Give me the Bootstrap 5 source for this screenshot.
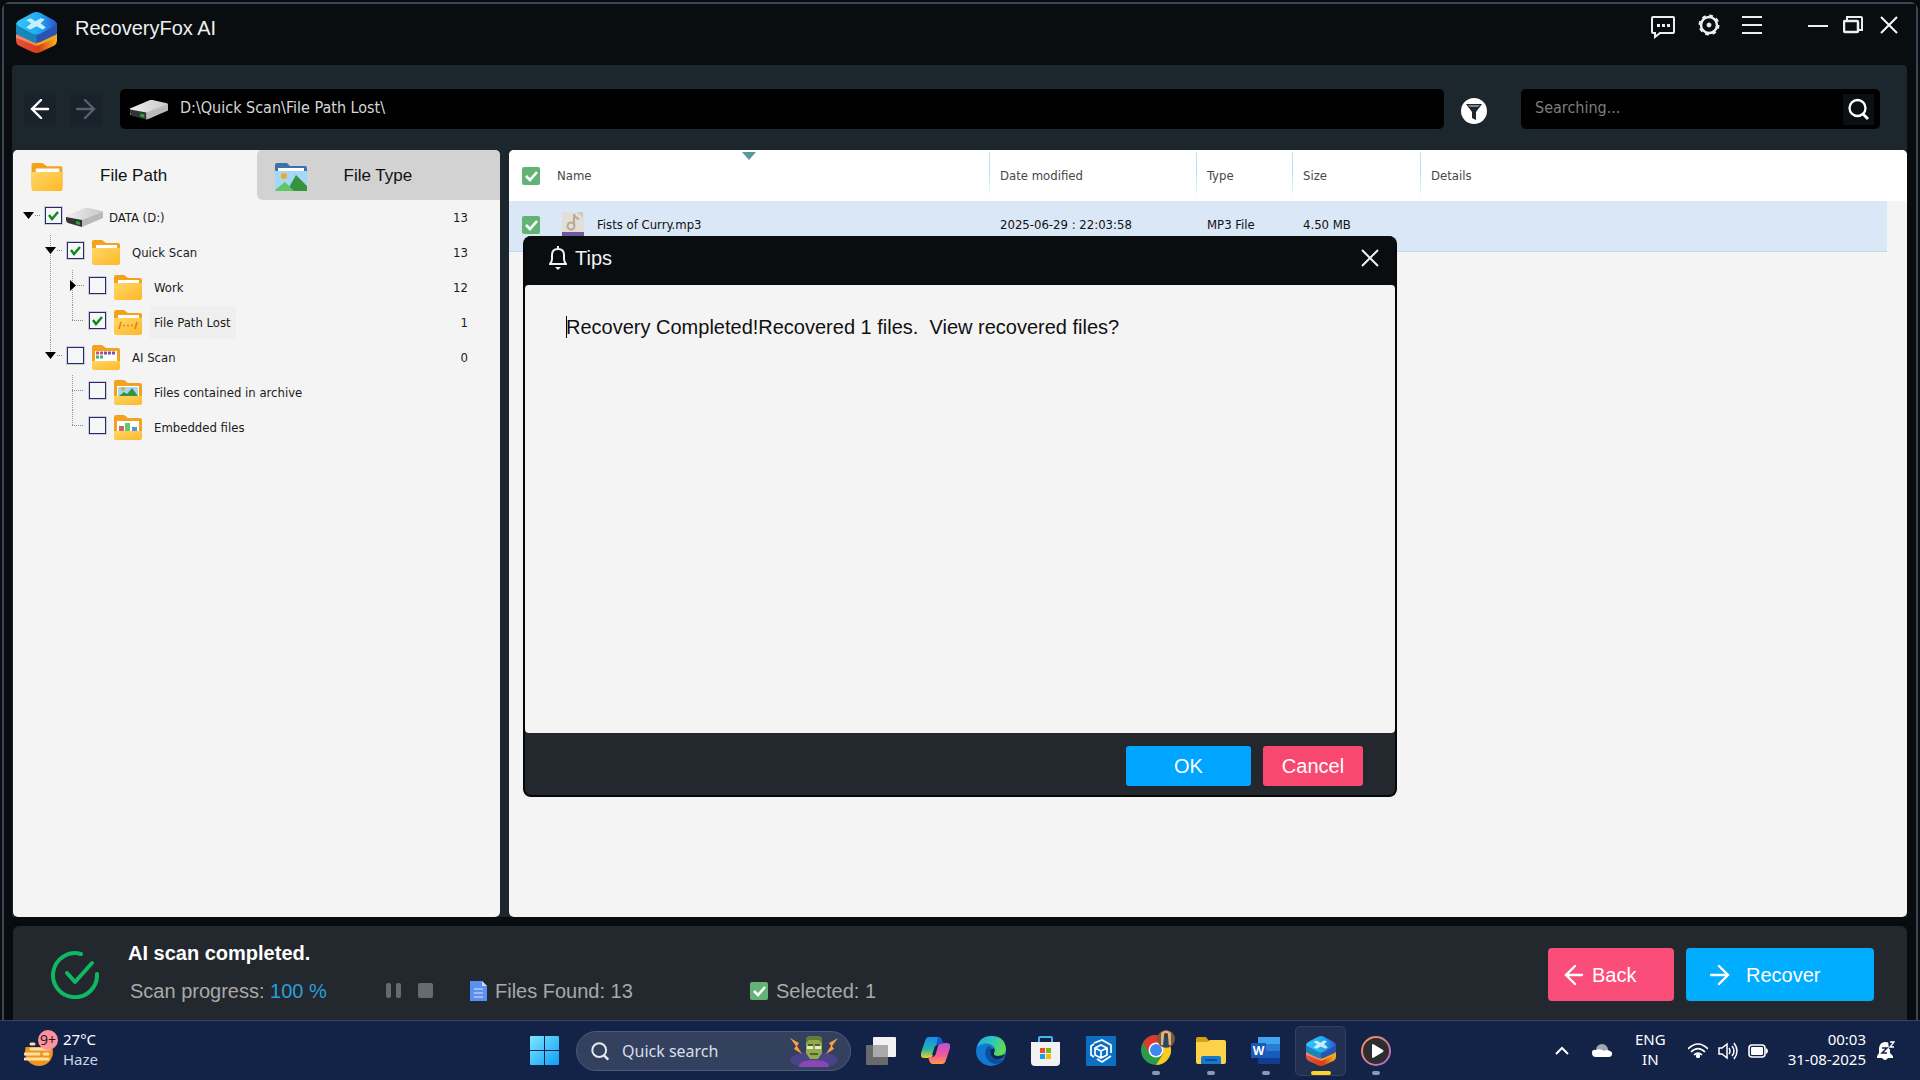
<!DOCTYPE html>
<html lang="en">
<head>
<meta charset="utf-8">
<meta name="viewport" content="width=device-width, initial-scale=1">
<title>RecoveryFox AI</title>
<link href="https://cdn.jsdelivr.net/npm/bootstrap@5.3.0/dist/css/bootstrap.min.css" rel="stylesheet">
<style>
  :root { --ui: "Noto Sans", "Open Sans", sans-serif; --list: "DejaVu Sans Condensed", "DejaVu Sans", sans-serif; --head: "Liberation Sans", Arial, sans-serif; }
  body { background: #080c0f; font-family: var(--head); font-size: 20px; line-height: 24px; color: #fff; overflow: hidden; }
  svg { display: block; flex: none; }
  button.plain { background: none; border: 0; padding: 0; color: inherit; display: flex; align-items: center; justify-content: center; flex: none; }
  .app-window { border: 2px solid #3d4753; border-bottom: 0; border-radius: 8px 8px 0 0; margin: 2px 2px 0; background: #080c0f; }
  .title-bar { height: 61px; padding: 0 18px 0 12px; background: #090d10; }
  .title-bar .tools { height: 42px; }
  .title-name { font-size: 20px; color: #f0f0f0; margin-left: 18px; padding-bottom: 6px; }
  .work-area { margin: 0 9px 0 8px; background: #1b262d; border-radius: 4px 4px 0 0; }
  .path-row { height: 85px; padding: 24px 27px 21px 12px; }
  .nav-btn { width: 32px; height: 32px; background: #19222a !important; }
  .path-box { background: #000; border-radius: 5px; height: 40px; color: #d6d6d6; font-family: var(--list); font-size: 16px; padding: 0 0 3px 10px; margin-left: 18px; }
  .search-box { background: #000; border-radius: 5px; height: 40px; width: 359px; margin-left: 30px; padding-right: 6px; }
  .search-box input { background: none; border: 0; outline: 0; color: #ccc; font-family: var(--list); font-size: 16px; padding: 0 0 3px 14px; }
  .search-box input::placeholder { color: #7d7d7d; opacity: 1; }
  .search-box button { background: #0b0f12; width: 31px; height: 31px; }
  .panes { gap: 9px; }
  .tree-pane { width: 487px; margin-left: 1px; background: #f4f4f4; border-radius: 5px; color: #1b1b1b; overflow: hidden; flex: none; }
  .tab-btn { border: 0; background: #f4f4f4; height: 50px; font-size: 17px; color: #111; padding: 2px 0 0 18px; text-align: left; display: flex; align-items: center; gap: 37px; flex: 1; }
  .tab-btn svg { margin-top: 2px; }
  .tab-btn.off { background: #d2d2d2; border-radius: 5px 0 0 6px; }
  .tree, .tree ul { list-style: none; margin: 0; padding: 0; }
  .tree { font-family: var(--list); font-size: 13px; line-height: 20px; padding-left: 7px; }
  .tree ul { padding-left: 22px; }
  .tree ul > li { position: relative; }
  .tree ul > li::before { content: ""; position: absolute; left: 8px; top: 0; bottom: 0; border-left: 1px dotted #999; }
  .tree ul > li:last-child::before { bottom: auto; height: 15px; }
  .tree-row { display: flex; align-items: center; height: 35px; padding-right: 32px; }
  .tree-row .twist { width: 25px; height: 31px; align-self: flex-start; position: relative; }
  .tree-row input { appearance: none; width: 17px; height: 17px; margin: 0 8px 4px 0; border: 1px solid #252c6b; outline: 1px solid #252c6b33; background: #f6f6f6; flex: none; }
  .tree-row input:checked { background: #f6f6f6 url("data:image/svg+xml,%3Csvg xmlns='http://www.w3.org/2000/svg' viewBox='0 0 15 15'%3E%3Cpath d='M3 7l3 4 6-7' fill='none' stroke='%230b8a17' stroke-width='2.4'/%3E%3C/svg%3E") center/15px no-repeat; }
  .tree-row label { margin-left: 8px; padding: 7px 5px 6px 4px; }
  .tree-row .wide-ico { margin: 0 -6px 0 -4px; }
  .tree-row label.current { background: #efefef; }
  .list-pane { background: #f4f4f4; border-radius: 5px; overflow: hidden; height: 767px; position: relative; }
  .file-table { width: 100%; table-layout: fixed; font-family: var(--list); font-size: 13px; line-height: 16px; color: #111; }
  .file-table th { background: #fff; height: 51px; font-weight: 400; color: #484848; padding: 1px 0 0 11px; vertical-align: middle; }
  .file-table th.ruled { background: linear-gradient(#bfe6f2, #a9def0 40%, #fff) 0 2px / 1px 46px no-repeat #fff; }
  .file-table td { background: #dae7f6; height: 50px; padding: 0 0 2px 11px; border-bottom: 1px solid #c5d7ea; vertical-align: middle; }
  .file-table td.edge { background: #f4f4f4; border: 0; }
  .file-table td:first-child, .file-table th:first-child { padding-left: 13px; }
  .green-tick { appearance: none; display: block; flex: none; width: 18px; height: 18px; margin: 0; border-radius: 2px; background: #63b377 url("data:image/svg+xml,%3Csvg xmlns='http://www.w3.org/2000/svg' viewBox='0 0 18 18'%3E%3Cpath d='M4 9l4 4 7-8' fill='none' stroke='white' stroke-width='2.6'/%3E%3C/svg%3E") center/18px no-repeat; }
  .sort-mark { position: absolute; left: 233px; top: 2px; }
  .status-bar { margin: 9px 9px 0; height: 94px; background: #22282d; border-radius: 6px 6px 0 0; padding: 3px 33px 0 38px; }
  .status-text { padding: 0 0 6px 29px; }
  .status-title { font-weight: 700; font-size: 20px; }
  .status-line { color: #a9a9a9; font-size: 20px; margin-top: 14px; }
  .status-line .blue { color: #2c9fd9; }
  .seg-a { width: 258px; padding-left: 2px; } .seg-b { width: 84px; } .seg-c { width: 280px; }
  .big-btn { height: 53px; border: 0; border-radius: 4px; font-size: 20px; color: #fff; display: flex; align-items: center; }
  .pink { background: #fa4d79; } .sky { background: #00adff; }
  .dialog-layer { position: absolute; left: 0; right: 0; top: 12px; height: 1008px; pointer-events: none; }
  .tips { width: 874px; background: #22282d; border: 2px solid #050809; border-top: 0; border-radius: 8px; pointer-events: auto; overflow: hidden; }
  .tips-head { background: #090d10; height: 49px; padding: 0 16px 4px 24px; color: #f2f2f2; }
  .tips-text { background: #f4f4f4; color: #111; height: 448px; border-radius: 4px; padding: 30px 41px; white-space: pre-wrap; }
  .caret-bar { border-left: 1px solid #000; margin-right: -1px; }
  .tips-foot { height: 62px; padding: 13px 32px 0; gap: 12px; }
  .tips-foot button { height: 40px; border: 0; border-radius: 3px; color: #fff; font-size: 20px; }
  .tips-foot .sky { background: #00a5ff; } .tips-foot .pink { background: #f84870; }
  .task-bar { height: 60px; background: #132348; border-top: 1px solid #34435f; display: grid; grid-template-columns: 1fr auto 1fr; align-items: center; font-family: var(--ui); font-size: 15px; line-height: 20px; }
  .two-line { padding-bottom: 4px; }
  .slot { width: 55px; height: 50px; display: flex; align-items: center; justify-content: center; position: relative; }
  .slot.run::after { content: ""; position: absolute; left: 24px; bottom: 1px; width: 8px; height: 4px; border-radius: 2px; background: #8e99b0; }
  .slot.live::before { content: ""; position: absolute; inset: 0 2px; border: 1px solid #33415f; border-radius: 5px; background: #212f50; }
  .slot.live svg { position: relative; }
  .slot.live::after { content: ""; position: absolute; left: 18px; bottom: 1px; width: 20px; height: 4px; border-radius: 2px; background: #fdd22c; }
  .task-search { width: 275px; height: 40px; border: 1px solid #4b5a7c; border-radius: 20px; background: #33415f; margin: 0 2px 0 4px; padding: 0 11px 0 14px; }
  .task-search input { background: none; border: 0; outline: 0; color: #fff; font-size: 16px; width: 150px; padding: 0 0 0 12px; }
  .task-search input::placeholder { color: #d9deea; opacity: 1; }
</style>
<script src="https://cdn.jsdelivr.net/npm/bootstrap@5.3.0/dist/js/bootstrap.bundle.min.js"></script>
</head>
<body>
<!-- shared drawings -->
<svg width="0" height="0" class="position-absolute" aria-hidden="true">
  <defs>
    <linearGradient id="gTop" x1="0" x2="1"><stop offset="0" stop-color="#35c8fb"/><stop offset=".6" stop-color="#1ea6f0"/><stop offset="1" stop-color="#2b57cf"/></linearGradient>
    <linearGradient id="gBot" x1="0" x2="1"><stop offset="0" stop-color="#e4553f"/><stop offset=".55" stop-color="#d93d16"/><stop offset="1" stop-color="#f7b51e"/></linearGradient>
    <linearGradient id="gFold" x1="0" y1="0" x2="1" y2="1"><stop offset="0" stop-color="#ffd768"/><stop offset="1" stop-color="#fdb827"/></linearGradient>
    <linearGradient id="gWin" x1="0" y1="0" x2="1" y2="1"><stop offset="0" stop-color="#7be8ff"/><stop offset="1" stop-color="#109df5"/></linearGradient>
    <linearGradient id="gDrive" x1="0" x2="1"><stop offset="0" stop-color="#eeeeee"/><stop offset="1" stop-color="#c9c9c9"/></linearGradient>
    <symbol id="fox" viewBox="0 0 40 40">
      <path d="M0 22l20 9 20-9v6q0 3-3 5l-13 6q-4 2-8 0L3 33q-3-2-3-5z" fill="url(#gBot)"/>
      <path d="M0 21l20 8v4q-2 0-3-1L0 25z" fill="#ff9b7d" opacity=".75"/>
      <path d="M20 29l20-8v4l-17 7q-1 1-3 1z" fill="#f7a51e"/>
      <path d="M0 11h40v8q0 3-3 4l-13 6q-4 2-8 0L3 23q-3-1-3-4z" fill="#1786bb"/>
      <path d="M20 12h20v7q0 3-3 4l-13 6q-2 1-4 1z" fill="#2a54b4"/>
      <path d="M3 8L16 1q4-2 8 0l13 7q5 3 0 6l-13 7q-4 2-8 0L3 14q-5-3 0-6z" fill="url(#gTop)"/>
      <path d="M10 8l4-2 5 3 5-3 4 1-4 4 5 4-3 2-6-3-6 3-4-2 5-4z" fill="#c9efff"/>
    </symbol>
    <symbol id="folder" viewBox="0 0 28 25">
      <path d="M0 2q0-2 2-2h8l4 3h12q2 0 2 2v15H0z" fill="#f2a31b"/>
      <path d="M0 8h28v15q0 2-2 2H2q-2 0-2-2z" fill="url(#gFold)"/>
      <path d="M4 5h21v3H4z" fill="#fff"/>
    </symbol>
    <symbol id="openfolder" viewBox="0 0 28 25">
      <path d="M0 2q0-2 2-2h8l4 3h12q2 0 2 2v15H0z" fill="#f2a31b"/><path d="M3 6h22v13H3z" fill="#fff"/>
      <path d="M0 16h28v7q0 2-2 2H2q-2 0-2-2z" fill="url(#gFold)"/>
    </symbol>
    <symbol id="drive" viewBox="0 0 37 19">
      <path d="M0 8L19 0q2-1 4 0l13 3q1 0 1 2v4L18 18 0 14z" fill="url(#gDrive)"/>
      <path d="M0 9l16 3v7L2 15q-2-1-2-3z" fill="#333"/><path d="M16 12L37 4v6l-21 9z" fill="#b9b9b9"/>
      <path d="M10 13l4 1v3l-4-1z" fill="#29a53d"/>
    </symbol>
    <symbol id="larr" viewBox="0 0 20 20"><path d="M18 10H2M11 1L2 10l9 9" fill="none" stroke="currentColor" stroke-width="2.4" stroke-linecap="round"/></symbol>
    <symbol id="rarr" viewBox="0 0 20 20"><path d="M1 10h17M9 1l9 9-9 9" fill="none" stroke="currentColor" stroke-width="2.4" stroke-linecap="round"/></symbol>
    <symbol id="cross" viewBox="0 0 18 18"><path d="M1 1l16 16M17 1L1 17" fill="none" stroke="currentColor" stroke-width="2"/></symbol>
    <symbol id="lens" viewBox="0 0 22 22"><circle cx="9.500" cy="10" r="8" fill="none" stroke="currentColor" stroke-width="2.300"/><path d="M15 16l5 5" stroke="currentColor" stroke-width="2.800"/></symbol>
    <symbol id="down" viewBox="0 0 25 31"><path d="M3 12h11l-5.500 7z" fill="#000"/><path d="M15 15.500h5" stroke="#888" stroke-dasharray="1 1"/></symbol>
    <symbol id="right" viewBox="0 0 25 31"><path d="M6 10l6 5.500L6 21z" fill="#000"/><path d="M13 15.500h7" stroke="#888" stroke-dasharray="1 1"/></symbol>
    <symbol id="leaf" viewBox="0 0 25 31"><path d="M8 15.500h12" stroke="#888" stroke-dasharray="1 1"/></symbol>
  </defs>
</svg>

<div class="app-window">
  <header class="title-bar d-flex align-items-start">
    <div class="d-flex align-items-center pt-1">
      <svg class="mt-1" width="41" height="41"><use href="#fox"/></svg>
      <span class="title-name">RecoveryFox AI</span>
    </div>
    <div class="tools d-flex align-items-center ms-auto">
      <button class="plain" aria-label="Feedback"><svg class="mt-1" width="24" height="24" viewBox="0 0 24 24" fill="none" stroke="#eee" stroke-width="2"><path d="M2 2h20q1 0 1 1v14q0 1-1 1H9l-5 4v-4H2q-1 0-1-1V3q0-1 1-1z"/><path d="M6 10.500h3m2 0h3m2 0h3" stroke-width="3"/></svg></button>
      <button class="plain" style="margin-left:23px" aria-label="Settings"><svg width="22" height="22" viewBox="0 0 22 22" fill="none" stroke="#eee"><circle cx="11" cy="11" r="8" stroke-width="2.500"/><circle cx="11" cy="11" r="9.500" stroke-width="2" stroke-dasharray="3.730 3.730"/><circle cx="11" cy="11" r="2" fill="#eee"/></svg></button>
      <button class="plain" style="margin-left:22px" aria-label="Menu"><svg width="20" height="20" viewBox="0 0 20 20" stroke="#eee" stroke-width="2"><path d="M0 2h20M0 10h20M0 18h20"/></svg></button>
      <button class="plain" style="margin-left:46px" aria-label="Minimize"><svg width="20" height="20" viewBox="0 0 20 20" stroke="#eee" stroke-width="2"><path d="M0 11h20"/></svg></button>
      <button class="plain" style="margin-left:15px" aria-label="Restore"><svg width="20" height="18" viewBox="0 0 20 18" fill="none" stroke="#eee" stroke-width="2"><rect x="1" y="5" width="14" height="11" rx="1" stroke-width="2.500"/><path d="M4 4V1h14q1 0 1 1v12h-3"/></svg></button>
      <button class="plain text-light" style="margin-left:17px" aria-label="Close"><svg width="18" height="18"><use href="#cross"/></svg></button>
    </div>
  </header>

  <main class="work-area">
    <div class="path-row d-flex align-items-center">
      <button class="plain nav-btn" aria-label="Go back"><svg width="20" height="20"><use href="#larr"/></svg></button>
      <button class="plain nav-btn" style="margin-left:14px;color:#56616a" aria-label="Go forward"><svg width="20" height="20"><use href="#rarr"/></svg></button>
      <div class="path-box d-flex align-items-center flex-grow-1"><svg class="mt-1 me-2" width="38" height="20"><use href="#drive"/></svg><span class="ms-1">D:\Quick Scan\File Path Lost\</span></div>
      <button class="plain" style="margin-left:14px" aria-label="Filter"><svg class="mt-1" width="33" height="28" viewBox="0 0 33 28"><circle cx="16" cy="14" r="13" fill="#fff"/><path d="M8 7h16l-6 8v8l-4-2v-6z" fill="#1b262d"/><path d="M10 8h12l-2 2h-8z" fill="#7b858a"/></svg></button>
      <div class="search-box d-flex align-items-center">
        <input class="flex-grow-1" type="text" placeholder="Searching..." aria-label="Search files">
        <button class="plain" aria-label="Search"><svg width="22" height="22"><use href="#lens"/></svg></button>
      </div>
    </div>

    <div class="panes d-flex">
      <section class="tree-pane">
        <div class="d-flex">
          <button class="tab-btn"><svg width="32" height="28" viewBox="0 0 28 25"><use href="#folder"/></svg>File Path</button>
          <button class="tab-btn off"><svg width="32" height="28" viewBox="0 0 32 28"><path d="M0 2q0-2 2-2h10l3 3h15q2 0 2 2v4H0z" fill="#3f73a8"/><path d="M3 5h26v5H3z" fill="#fff"/><path d="M0 8h32v18q0 2-2 2H2q-2 0-2-2z" fill="#a3d8f8"/><circle cx="9" cy="13" r="3" fill="#f5a623"/><path d="M12 28l9-16 11 11v5z" fill="#38913c"/><path d="M0 27l10-8 9 9H1z" fill="#63c463"/></svg>File Type</button>
        </div>
        <ul class="tree">
          <li>
            <div class="tree-row"><button class="plain twist" aria-label="Collapse"><svg width="25" height="31"><use href="#down"/></svg></button><input type="checkbox" id="t1" checked><svg class="wide-ico" width="37" height="19"><use href="#drive"/></svg><label for="t1">DATA (D:)</label><span class="ms-auto">13</span></div>
            <ul>
              <li>
                <div class="tree-row"><button class="plain twist" aria-label="Collapse"><svg width="25" height="31"><use href="#down"/></svg></button><input type="checkbox" id="t2" checked><svg width="28" height="25"><use href="#folder"/></svg><label for="t2">Quick Scan</label><span class="ms-auto">13</span></div>
                <ul>
                  <li><div class="tree-row"><button class="plain twist" aria-label="Expand"><svg width="25" height="31"><use href="#right"/></svg></button><input type="checkbox" id="t3"><svg width="28" height="25"><use href="#folder"/></svg><label for="t3">Work</label><span class="ms-auto">12</span></div></li>
                  <li><div class="tree-row"><svg class="twist" width="25" height="31"><use href="#leaf"/></svg><input type="checkbox" id="t4" checked><svg width="28" height="25" viewBox="0 0 28 25"><use href="#folder"/><path d="M5 19l2-7m14 7l2-7M9 15.500h2m2 0h2m2 0h2" stroke="#e8791c" stroke-width="1.600"/></svg><label for="t4" class="current">File Path Lost</label><span class="ms-auto">1</span></div></li>
                </ul>
              </li>
              <li>
                <div class="tree-row"><button class="plain twist" aria-label="Collapse"><svg width="25" height="31"><use href="#down"/></svg></button><input type="checkbox" id="t5"><svg width="28" height="25" viewBox="0 0 28 25"><use href="#openfolder"/><path d="M4 8h8" stroke="#d0506e" stroke-width="3" stroke-dasharray="3 1"/><path d="M12 8h12" stroke="#7a4fa8" stroke-width="3" stroke-dasharray="3 1"/><path d="M4 12h8" stroke="#37ad95" stroke-width="3" stroke-dasharray="3 1"/></svg><label for="t5">AI Scan</label><span class="ms-auto">0</span></div>
                <ul>
                  <li><div class="tree-row"><svg class="twist" width="25" height="31"><use href="#leaf"/></svg><input type="checkbox" id="t6"><svg width="28" height="25" viewBox="0 0 28 25"><use href="#openfolder"/><path d="M4 7h20v9H4z" fill="#a3d8f8"/><circle cx="9" cy="9" r="2" fill="#f5a623"/><path d="M5 16l5-4 3 2 5-6 6 8z" fill="#38913c"/></svg><label for="t6">Files contained in archive</label></div></li>
                  <li><div class="tree-row"><svg class="twist" width="25" height="31"><use href="#leaf"/></svg><input type="checkbox" id="t7"><svg width="28" height="25" viewBox="0 0 28 25"><use href="#openfolder"/><path d="M5 11h5v5H5z" fill="#d0607a"/><path d="M11 8h5v8h-5z" fill="#5fcb6a"/><path d="M18 12h5v4h-5z" fill="#4b97dd"/></svg><label for="t7">Embedded files</label></div></li>
                </ul>
              </li>
            </ul>
          </li>
        </ul>
      </section>

      <section class="list-pane flex-grow-1">
        <svg class="sort-mark" width="14" height="8" viewBox="0 0 14 8"><path d="M0 0h14L7 8z" fill="#5f969c"/></svg>
        <table class="file-table">
          <colgroup><col style="width:37px"><col style="width:443px"><col style="width:207px"><col style="width:96px"><col style="width:128px"><col><col style="width:20px"></colgroup>
          <thead><tr><th><input class="green-tick" type="checkbox" checked aria-label="Select all"></th><th>Name</th><th class="ruled">Date modified</th><th class="ruled">Type</th><th class="ruled">Size</th><th class="ruled">Details</th><th></th></tr></thead>
          <tbody><tr>
            <td><input class="green-tick" type="checkbox" checked aria-label="Select Fists of Curry.mp3"></td>
            <td><div class="d-flex align-items-center ps-1"><svg class="me-2" width="24" height="30" viewBox="0 0 24 30"><path d="M1 2h16l6 6v22H1z" fill="#e2dfd7"/><path d="M16 2h6v6z" fill="#cfcac0"/><path d="M13 16V4q1 4 5 5" fill="none" stroke="#b9a99b" stroke-width="2"/><circle cx="10" cy="16" r="3.500" fill="none" stroke="#b9a99b" stroke-width="2"/><path d="M1 22h22v8H1z" fill="#71589b"/></svg><span class="ms-1">Fists of Curry.mp3</span></div></td>
            <td>2025-06-29 : 22:03:58</td><td>MP3 File</td><td>4.50 MB</td><td></td><td class="edge"></td>
          </tr></tbody>
        </table>
      </section>
    </div>
  </main>

  <footer class="status-bar d-flex align-items-center">
    <svg width="48" height="48" viewBox="0 0 48 48" fill="none" stroke="#0fb862" stroke-width="4" stroke-linecap="round" stroke-linejoin="round"><path d="M30 3A22 22 0 1 0 46 23"/><path d="M16 22l8 9 17-19"/></svg>
    <div class="status-text flex-grow-1">
      <div class="status-title">AI scan completed.</div>
      <div class="status-line d-flex align-items-center">
        <span class="seg-a">Scan progress: <span class="blue">100 %</span></span>
        <span class="seg-b d-flex gap-3"><svg width="16" height="15" viewBox="0 0 16 15" fill="#676b6d"><rect width="5" height="15" rx="2"/><rect x="10" width="5" height="15" rx="2"/></svg><svg width="15" height="15"><rect width="15" height="15" rx="2" fill="#676b6d"/></svg></span>
        <span class="seg-c d-flex align-items-center gap-2"><svg width="17" height="20" viewBox="0 0 17 20"><path d="M0 0h12l5 5v15H0z" fill="#5b8ff0"/><path d="M12 0v5h5z" fill="#c7dafd"/><path d="M4 8h9M4 12h9M4 16h9" stroke="#dce8ff"/></svg>Files Found: 13</span>
        <label class="d-flex align-items-center gap-2"><input class="green-tick" type="checkbox" checked>Selected: 1</label>
      </div>
    </div>
    <button class="big-btn pink ps-3 me-2" style="width:126px"><svg class="me-2" width="20" height="20"><use href="#larr"/></svg>Back</button>
    <button class="big-btn sky ps-4 ms-1" style="width:188px"><svg class="me-3" width="20" height="20"><use href="#rarr"/></svg>Recover</button>
  </footer>
</div>

<nav class="task-bar" aria-label="Taskbar">
  <div class="d-flex align-items-center ps-4">
    <svg class="mb-1" width="35" height="37" viewBox="0 0 35 37"><circle cx="15" cy="22" r="14" fill="#ee9422"/><path d="M0 8h18v9H0z" fill="#132348"/><path d="M7 14h3M7 19h18M1 24h14m5 0h4M1 29h23" stroke="#ffe0a0" stroke-width="3" stroke-linecap="round"/><circle cx="24" cy="10" r="10" fill="#ff929c"/><text x="24" y="15" font-size="14" text-anchor="middle" fill="#231a2a">9+</text></svg>
    <div class="two-line ms-1">27°C<br><span style="color:#cdd6e6">Haze</span></div>
  </div>
  <div class="d-flex align-items-center">
    <button class="plain slot" aria-label="Start"><svg width="29" height="29" viewBox="0 0 29 29" fill="url(#gWin)"><path d="M1 0h13v14H0V1q0-1 1-1zM15 0h13q1 0 1 1v13H15zM0 15h14v14H1q-1 0-1-1zM15 15h14v13q0 1-1 1H15z"/></svg></button>
    <div class="task-search d-flex align-items-center"><svg width="19" height="20" color="#e6eaf3"><use href="#lens"/></svg><input type="text" placeholder="Quick search" aria-label="Quick search">
      <svg class="ms-auto" width="50" height="32" viewBox="0 0 50 32"><ellipse cx="25" cy="25" rx="24" ry="8" fill="#6046b0" opacity=".5"/><path d="M10 32q0-7 15-7t15 7z" fill="#8a46b4"/><path d="M17 4q0-3 8-3t8 3v14l-4 6h-8l-4-6z" fill="#93a94f"/><path d="M17 8V3q8-4 16 0v5l-3-3H20z" fill="#64793a"/><path d="M18 11h6v3h-6zm8 0h6v3h-6z" fill="#e8edc4"/><path d="M19 10h5m2 0h5M21 19h8" stroke="#39492a" stroke-width="1.500"/><path d="M1 3l9 5-2 3 5 8-8-5 2-3zM49 3l-9 5 2 3-5 8 8-5-2-3z" fill="#ff9d3f"/></svg></div>
    <button class="plain slot" aria-label="Task view"><svg width="30" height="28" viewBox="0 0 30 28"><rect y="8" width="22" height="20" rx="1" fill="#6a6a6c"/><rect x="7" width="23" height="20" rx="1" fill="#f2f2f2"/><path d="M7 8h15v12H7z" fill="#aaa"/></svg></button>
    <button class="plain slot" aria-label="Copilot"><svg width="29" height="27" viewBox="0 0 29 27"><defs><linearGradient id="cpa" x1="0" y1="0" x2="0" y2="1"><stop stop-color="#178bf2"/><stop offset=".6" stop-color="#28b6a5"/><stop offset="1" stop-color="#f5cf26"/></linearGradient><linearGradient id="cpb" x1="0" y1="0" x2="0" y2="1"><stop stop-color="#b650dd"/><stop offset=".6" stop-color="#f55b93"/><stop offset="1" stop-color="#ff9b4a"/></linearGradient></defs><path d="M8 0h9q3 0 4 4l1 3h-4q-3 0-4 4l-2 7q-1 3-4 3H3q-4 0-3-5L4 4q1-4 4-4z" fill="url(#cpa)"/><path d="M21 27h-9q-3 0-4-4l-1-3h4q3 0 4-4l2-7q1-3 4-3h5q4 0 3 5l-4 12q-1 4-4 4z" fill="url(#cpb)"/><path d="M17 0q3 0 4 4l1 3h-4q-2 0-3 2z" fill="#1457c8"/><path d="M14 9h2l-3 9h-2z" fill="#132348"/></svg></button>
    <button class="plain slot" aria-label="Edge"><svg width="30" height="30" viewBox="0 0 30 30"><defs><linearGradient id="edg" x1="0" y1="0" x2="1" y2=".4"><stop stop-color="#1fa9e8"/><stop offset=".6" stop-color="#34c7b4"/><stop offset="1" stop-color="#61dc4b"/></linearGradient></defs><circle cx="15" cy="15" r="15" fill="#1278d2"/><path d="M1 11Q4 0 15 0q14 0 15 13 0 7-8 7-5 0-4-3 3-4-2-8-7-4-15 2z" fill="url(#edg)"/><path d="M11 11q-5 9 3 15 5 4 12 0l3-3q-6 2-10-1-5-4-3-8l-2-4z" fill="#0b4fa0"/><path d="M15 13q5-2 3 4-1 3 4 3 4 0 7-2-1 4-5 5-7 1-9-4-1-3 0-6z" fill="#12264e"/></svg></button>
    <button class="plain slot" aria-label="Store"><svg width="29" height="30" viewBox="0 0 29 30"><path d="M8 7V2q0-1 1-1h11q1 0 1 1v5" fill="none" stroke="#3cb9f5" stroke-width="2"/><path d="M0 6h29v20q0 4-4 4H4q-4 0-4-4z" fill="#f2f2f2"/><path d="M9 12h5v5H9z" fill="#e84e27"/><path d="M15 12h5v5h-5z" fill="#7cb717"/><path d="M9 18h5v5H9z" fill="#16a1e8"/><path d="M15 18h5v5h-5z" fill="#fbb513"/></svg></button>
    <button class="plain slot" aria-label="PC Manager"><svg width="30" height="30" viewBox="0 0 30 30" fill="none" stroke="#fff" stroke-width="1.700"><rect width="30" height="30" rx="1" fill="#0b70c4" stroke="none"/><path d="M8 7l8-3 9 5v8M25 20l-9 6-5-3M8 21l-3-2V10l3-2"/><path d="M15 9l6 3v7l-6 3-6-3v-7zM9 12l6 3 6-3M15 15v7"/></svg></button>
    <button class="plain slot run" aria-label="Chrome"><svg class="mb-2" width="38" height="36" viewBox="-3 0 38 36"><circle cx="16" cy="21" r="15" fill="#2c9b48"/><path d="M3 13.500A15 15 0 0 1 29 13.500L16 14 10 25z" fill="#e0382c"/><path d="M29 13.500A15 15 0 0 1 16 36l7-11-1-11z" fill="#fcc921"/><circle cx="16" cy="21" r="7.500" fill="#fff"/><circle cx="16" cy="21" r="6" fill="#4287ee"/><circle cx="26" cy="10" r="9" fill="#80563c"/><path d="M21 4q5-5 10 0v12H21z" fill="#d9b684"/><path d="M24 7h4l1 11h-6z" fill="#264860"/><circle cx="26" cy="6" r="2" fill="#5d2d22"/></svg></button>
    <button class="plain slot run" aria-label="File Explorer"><svg width="30" height="27" viewBox="0 0 30 27"><path d="M0 2q0-2 2-2h8l3 4h15v5H0z" fill="#d99f0e"/><path d="M0 5h11l3-2h14q2 0 2 2v20q0 2-2 2H2q-2 0-2-2z" fill="#fcd24b"/><path d="M5 27v-6q0-2 2-2h16q2 0 2 2v6z" fill="#1679cc"/><path d="M9 23h12" stroke="#0b4f96" stroke-width="2"/></svg></button>
    <button class="plain slot run" aria-label="Word"><svg width="29" height="27" viewBox="0 0 29 27"><path d="M7 0h22v7H7z" fill="#41a5ee"/><path d="M7 7h22v7H7z" fill="#2b7cd3"/><path d="M7 14h22v7H7z" fill="#185abd"/><path d="M7 21h22v6H7z" fill="#103f91"/><rect y="6" width="15" height="15" rx="1" fill="#1c58b5"/><text x="7.500" y="18" font-size="12" font-weight="700" text-anchor="middle" fill="#fff">W</text></svg></button>
    <button class="plain slot live" aria-label="RecoveryFox AI"><svg width="30" height="30"><use href="#fox"/></svg></button>
    <button class="plain slot run" aria-label="Media Player"><svg width="30" height="30" viewBox="0 0 30 30"><defs><linearGradient id="mp" x1="0" y1="0" x2="1" y2="1"><stop stop-color="#ff914d"/><stop offset="1" stop-color="#a56ad6"/></linearGradient></defs><circle cx="15" cy="15" r="14" fill="#2d2d31" stroke="url(#mp)" stroke-width="2"/><path d="M11 9q0-1 1-1l10 6q1 1 0 2l-10 6q-1 0-1-1z" fill="#fff"/></svg></button>
  </div>
  <div class="d-flex align-items-center justify-content-end" style="padding-right:25px">
    <button class="plain" aria-label="Hidden icons"><svg width="14" height="9" viewBox="0 0 14 9"><path d="M1 8l6-6 6 6" fill="none" stroke="#fff" stroke-width="2"/></svg></button>
    <svg style="margin-left:23px" width="20" height="13" viewBox="0 0 20 13"><circle cx="10" cy="6" r="6" fill="#a0a8b8"/><path d="M4 13q-4 0-4-4t4-3q4-2 8 1 3-2 6 0 3 1 2 4-1 2-3 2z" fill="#fff"/></svg>
    <div class="two-line text-center" style="margin-left:23px">ENG<br>IN</div>
    <div class="d-flex align-items-center" style="gap:10px;margin-left:22px">
      <svg width="20" height="15" viewBox="0 0 20 15" fill="none" stroke="#fff" stroke-width="1.700"><path d="M0 6q10-10 20 0M3 9q7-7 14 0M6 12q4-4 8 0"/><circle cx="10" cy="13" r="1.300" fill="#fff"/></svg>
      <svg width="20" height="18" viewBox="0 0 20 18" fill="none" stroke="#fff" stroke-width="1.500"><path d="M1 6h3l5-4v14l-5-4H1zM11 6q2 3 0 6M14 4q4 5 0 10M16 1q6 8 0 16"/></svg>
      <svg width="20" height="14" viewBox="0 0 20 14"><rect x="1" y="1" width="16" height="12" rx="3" fill="none" stroke="#fff" stroke-width="1.600"/><rect x="3" y="3" width="12" height="8" rx="1" fill="#fff"/><path d="M18 4q2 1 2 3t-2 3z" fill="#fff"/></svg>
    </div>
    <div class="two-line text-end" style="margin-left:20px">00:03<br>31-08-2025</div>
    <svg style="margin-left:11px" width="18" height="20" viewBox="0 0 18 20"><path d="M0 15l2-3V7q1-6 6-6 4 0 5 2v9l3 3v2H0z" fill="#fff"/><path d="M5 17q3 4 6 0z" fill="#fff"/><path d="M5 7h5l-5 5h5" fill="none" stroke="#132348" stroke-width="1.500"/><path d="M11 0h7v8h-6z" fill="#132348"/><path d="M13 1h4l-4 5h4" fill="none" stroke="#fff" stroke-width="1.300"/></svg>
  </div>
</nav>

<div class="dialog-layer d-flex align-items-center justify-content-center">
  <div class="tips" role="dialog" aria-labelledby="tipsTitle">
    <div class="tips-head d-flex align-items-center">
      <svg width="18" height="24" viewBox="0 0 18 24" fill="none" stroke="#f2f2f2" stroke-width="2"><path d="M1 18q2-2 2-5V9q0-6 6-6t6 6v4q0 3 2 5zM9 3V0"/><path d="M6 21h6l-3 3z" fill="#f2f2f2" stroke="none"/></svg>
      <span id="tipsTitle" class="ms-2">Tips</span>
      <button class="plain ms-auto" aria-label="Close dialog"><svg width="18" height="18"><use href="#cross"/></svg></button>
    </div>
    <div class="tips-text"><span class="caret-bar"></span>Recovery Completed!Recovered 1 files.  View recovered files?</div>
    <div class="tips-foot d-flex justify-content-end"><button class="sky" style="width:125px">OK</button><button class="pink" style="width:100px">Cancel</button></div>
  </div>
</div>
</body>
</html>
